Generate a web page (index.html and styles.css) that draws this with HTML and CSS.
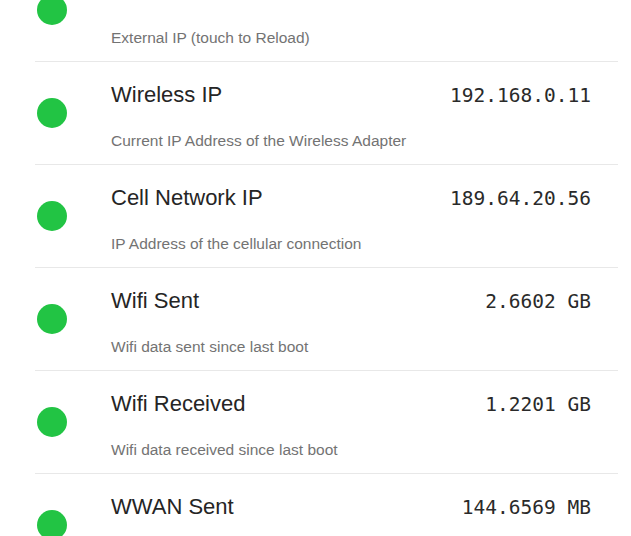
FILE: index.html
```html
<!DOCTYPE html>
<html lang="en">
<head>
<meta charset="utf-8">
<title>Network Info</title>
<link rel="stylesheet" href="styles.css">
</head>
<body>
<ul class="list">
  <li class="row">
    <span class="dot"></span>
    <div class="body">
      <div class="head"><span class="title">External IP</span><span class="value">187.58.112.203</span></div>
      <div class="desc">External IP (touch to Reload)</div>
    </div>
  </li>
  <li class="row">
    <span class="dot"></span>
    <div class="body">
      <div class="head"><span class="title">Wireless IP</span><span class="value">192.168.0.11</span></div>
      <div class="desc">Current IP Address of the Wireless Adapter</div>
    </div>
  </li>
  <li class="row">
    <span class="dot"></span>
    <div class="body">
      <div class="head"><span class="title">Cell Network IP</span><span class="value">189.64.20.56</span></div>
      <div class="desc">IP Address of the cellular connection</div>
    </div>
  </li>
  <li class="row">
    <span class="dot"></span>
    <div class="body">
      <div class="head"><span class="title">Wifi Sent</span><span class="value">2.6602 GB</span></div>
      <div class="desc">Wifi data sent since last boot</div>
    </div>
  </li>
  <li class="row">
    <span class="dot"></span>
    <div class="body">
      <div class="head"><span class="title">Wifi Received</span><span class="value">1.2201 GB</span></div>
      <div class="desc">Wifi data received since last boot</div>
    </div>
  </li>
  <li class="row">
    <span class="dot"></span>
    <div class="body">
      <div class="head"><span class="title">WWAN Sent</span><span class="value">144.6569 MB</span></div>
      <div class="desc">WWAN data sent since last boot</div>
    </div>
  </li>
</ul>
</body>
</html>
```

FILE: styles.css
```css
html, body {
  margin: 0;
  padding: 0;
  background: #ffffff;
  overflow: hidden;
}

body {
  font-family: "Liberation Sans", Arial, sans-serif;
}

.list {
  list-style: none;
  margin: -41px 0 0 0;
  padding: 0;
}

.row {
  display: flex;
  align-items: center;
  height: 102px;
  margin: 0 13px 0 35px;
  padding-right: 27px;
  border-bottom: 1px solid #e8e8e8;
}

.dot {
  flex: none;
  width: 30px;
  height: 30px;
  margin-left: 2px;
  margin-right: 44px;
  border-radius: 50%;
  background: #22c444;
}

.body {
  flex: 1;
  align-self: stretch;
  padding-top: 20px;
  box-sizing: border-box;
}

.head {
  display: flex;
  justify-content: space-between;
  align-items: baseline;
}

.title {
  font-size: 22px;
  line-height: 26px;
  color: #252525;
}

.value {
  font-family: "DejaVu Sans Mono", "Liberation Mono", monospace;
  font-size: 19.5px;
  line-height: 26px;
  color: #2a2a2a;
}

.desc {
  margin-top: 22px;
  font-size: 15.5px;
  line-height: 20px;
  color: #737373;
}
```
